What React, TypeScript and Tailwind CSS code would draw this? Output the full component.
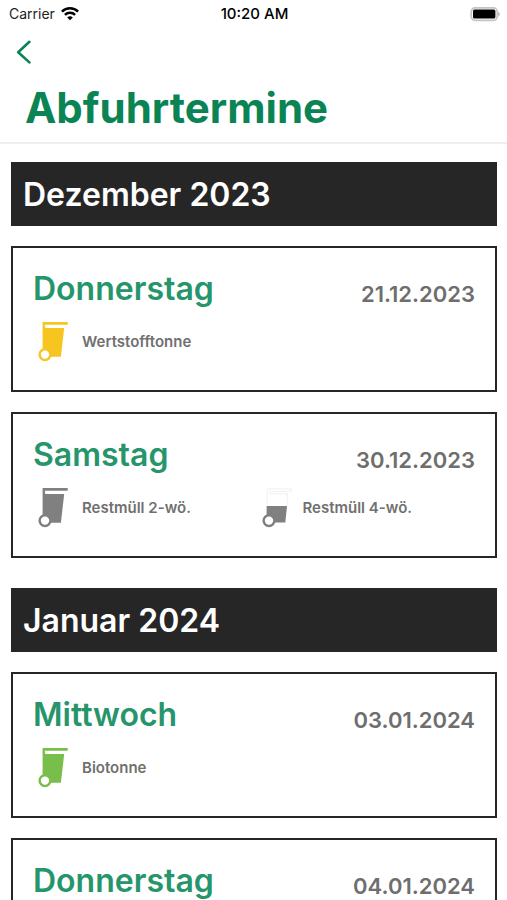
type BinKind = "yellow" | "gray" | "half" | "green";

type Pickup = {
  day: string;
  date: string;
  bins: { label: string; kind: BinKind }[];
};

type Month = {
  title: string;
  pickups: Pickup[];
};

const months: Month[] = [
  {
    title: "Dezember 2023",
    pickups: [
      {
        day: "Donnerstag",
        date: "21.12.2023",
        bins: [{ label: "Wertstofftonne", kind: "yellow" }],
      },
      {
        day: "Samstag",
        date: "30.12.2023",
        bins: [
          { label: "Restmüll 2-wö.", kind: "gray" },
          { label: "Restmüll 4-wö.", kind: "half" },
        ],
      },
    ],
  },
  {
    title: "Januar 2024",
    pickups: [
      {
        day: "Mittwoch",
        date: "03.01.2024",
        bins: [{ label: "Biotonne", kind: "green" }],
      },
      { day: "Donnerstag", date: "04.01.2024", bins: [] },
    ],
  },
];

const binColors: Record<BinKind, string> = {
  yellow: "text-[#f7c520]",
  gray: "text-[#808080]",
  half: "text-[#808080]",
  green: "text-[#78be4b]",
};

function BinIcon({ kind }: { kind: BinKind }) {
  return (
    <svg
      viewBox={kind === "half" ? "-3 0 32 40" : "0 0 32 40"}
      className={`h-10 w-8 shrink-0 overflow-visible ${binColors[kind]}`}
      fill="currentColor"
      aria-hidden="true"
    >
      {kind === "half" ? (
        <>
          <path
            d="M5 18V.8h24.6v2.4H7.2l1 2.6h17.4L24.9 18"
            fill="none"
            stroke="#ededed"
            strokeWidth="0.8"
          />
          <path d="M4.6 18h20.4l-1.7 16.6H4.6z" />
        </>
      ) : (
        <path d="M4.6 0h24a1.3 1.3 0 0 1 0 2.8H6.8l.5 3.2h18.9L22.9 34.8H4.6z" />
      )}
      <circle cx="7" cy="32.6" r="5.4" fill="white" stroke="currentColor" strokeWidth="2.4" />
    </svg>
  );
}

function StatusBar() {
  return (
    <div className="grid h-7 grid-cols-3 items-center pr-[7px] pl-[9px] text-[14px] leading-5 text-[#222]">
      <div className="flex items-center gap-[6px]">
        <span>Carrier</span>
        <svg viewBox="0 0 18 14" className="h-[14px] w-[18px]" fill="none" stroke="black" strokeWidth="2.4" aria-hidden="true">
          <path d="M.9 4.6a11.6 11.6 0 0 1 16.2 0" />
          <path d="M3.9 7.9a7.3 7.3 0 0 1 10.2 0" />
          <path d="M9 13.3 6.2 10.5a4 4 0 0 1 5.6 0z" fill="black" stroke="none" />
        </svg>
      </div>
      <span className="text-center text-[15px] font-medium text-black">10:20 AM</span>
      <svg viewBox="0 0 31 15" className="h-[15px] w-[31px] justify-self-end" aria-hidden="true">
        <rect x="2.2" y=".9" width="26" height="12.4" rx="3.8" fill="white" stroke="#c4c4c4" strokeWidth="1.8" />
        <rect x="4" y="2.6" width="22.4" height="9" rx="1.6" fill="black" />
        <path d="M29.2 4.8c2.2.8 2.2 3.8 0 4.6z" fill="#b8b8b8" />
      </svg>
    </div>
  );
}

function PickupCard({ pickup }: { pickup: Pickup }) {
  return (
    <article className="min-h-[146px] border-2 border-[#262626] px-5 pt-[19px]">
      <div className="flex items-center justify-between">
        <h3 className="text-[32px] leading-[44px] font-semibold text-[#26956b]">{pickup.day}</h3>
        <time className="pt-[10px] text-[22px] leading-8 font-semibold text-[#6e6e6e]">{pickup.date}</time>
      </div>
      <ul className="grid grid-cols-2 gap-x-1 pt-[11px] pl-[5px]">
        {pickup.bins.map((bin) => (
          <li key={bin.label} className="flex items-center gap-3 text-[15px] leading-5 font-semibold text-[#707070]">
            <BinIcon kind={bin.kind} />
            {bin.label}
          </li>
        ))}
      </ul>
    </article>
  );
}

export default function App() {
  return (
    <div className="flex h-screen flex-col bg-white font-['Inter',sans-serif]">
      <header className="shrink-0 border-b-2 border-[#eeeeee]">
        <StatusBar />
        <button type="button" aria-label="Zurück" className="flex h-12 w-12 items-center pl-4">
          <svg viewBox="0 0 16 24" className="h-6 w-4" fill="none" stroke="#0a8454" strokeWidth="2.6" strokeLinecap="round" strokeLinejoin="round" aria-hidden="true">
            <path d="M13.4 1.8 2.2 12.2 13.4 22.4" />
          </svg>
        </button>
        <h1 className="px-[25px] pt-[3px] pb-[5px] text-[42px] leading-[58px] font-bold text-[#0a8454]">Abfuhrtermine</h1>
      </header>
      <main className="flex flex-1 flex-col gap-[30px] overflow-y-auto pt-[18px] pr-[10px] pl-[11px] [scrollbar-width:none]">
        {months.map((month) => (
          <section key={month.title} className="flex flex-col gap-5">
            <h2 className="bg-[#262626] px-3 pt-[9px] pb-[7px] text-[32px] leading-[48px] font-semibold text-white">{month.title}</h2>
            {month.pickups.map((pickup) => (
              <PickupCard key={pickup.date} pickup={pickup} />
            ))}
          </section>
        ))}
      </main>
    </div>
  );
}
